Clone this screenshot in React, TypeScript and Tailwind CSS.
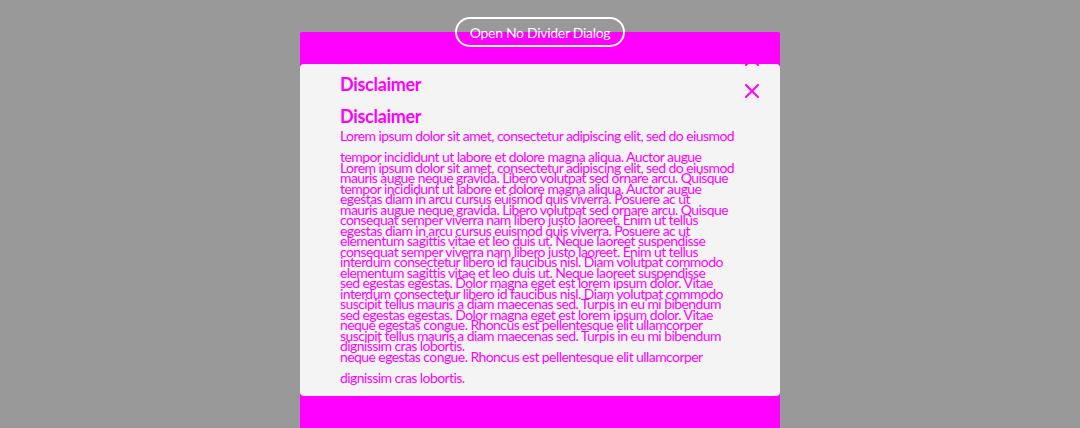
const lines = [
  'Lorem ipsum dolor sit amet, consectetur adipiscing elit, sed do eiusmod',
  'tempor incididunt ut labore et dolore magna aliqua. Auctor augue',
  'mauris augue neque gravida. Libero volutpat sed ornare arcu. Quisque',
  'egestas diam in arcu cursus euismod quis viverra. Posuere ac ut',
  'consequat semper viverra nam libero justo laoreet. Enim ut tellus',
  'elementum sagittis vitae et leo duis ut. Neque laoreet suspendisse',
  'interdum consectetur libero id faucibus nisl. Diam volutpat commodo',
  'sed egestas egestas. Dolor magna eget est lorem ipsum dolor. Vitae',
  'suscipit tellus mauris a diam maecenas sed. Turpis in eu mi bibendum',
  'neque egestas congue. Rhoncus est pellentesque elit ullamcorper',
  'dignissim cras lobortis.',
];

function CloseIcon() {
  return (
    <svg width="14" height="14" viewBox="0 0 14 14" fill="none">
      <path d="M1 1L13 13M13 1L1 13" stroke="#ff00ff" strokeWidth="2" strokeLinecap="square" />
    </svg>
  );
}

function DialogContent() {
  return (
    <div className="relative px-[40px] pt-[41px] text-[#ff00ff]">
      <button className="absolute right-[21px] top-[20px] flex h-[14px] w-[14px] items-center justify-center">
        <CloseIcon />
      </button>
      <h2 className="text-[18px] font-bold leading-[22px] tracking-[-0.3px]">Disclaimer</h2>
      <div className="mt-[30px] text-[14px] leading-[21px] tracking-[-0.58px]">
        {lines.map((l) => (
          <div key={l} className="whitespace-nowrap">{l}</div>
        ))}
      </div>
    </div>
  );
}

export default function App() {
  return (
    <div
      className="flex h-[428px] w-full flex-col items-center overflow-hidden bg-[#999999]"
      style={{ fontFamily: 'Lato, "Noto Sans", sans-serif' }}
    >
      <button className="relative z-10 mt-[17px] flex h-[30px] w-[170px] items-center justify-center rounded-full border-2 border-white text-[14px] tracking-[-0.3px] text-white">
        Open No Divider Dialog
      </button>
      <div className="relative -mt-[15px] h-[396px] w-[480px] shrink-0 rounded-t-[2px] bg-[#ff00ff] pt-[32px]">
        <div className="relative h-[332px] rounded-[4px] bg-[#f4f4f4]">
          <div className="absolute inset-x-0 top-[-32px]">
            <DialogContent />
          </div>
          <DialogContent />
        </div>
      </div>
    </div>
  );
}
